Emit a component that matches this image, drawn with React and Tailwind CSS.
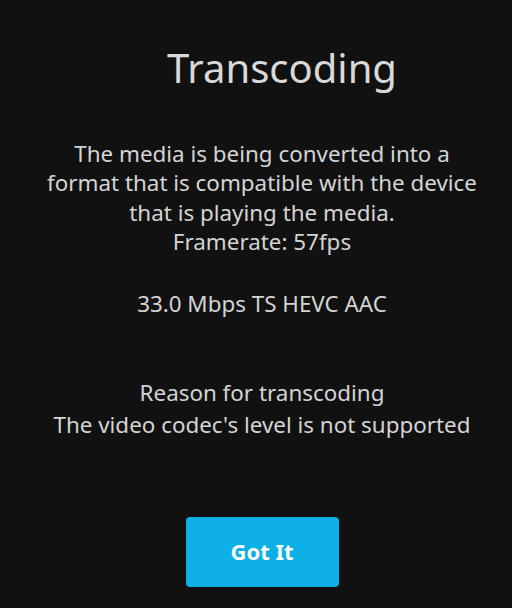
export default function App() {
  return (
    <div
      className="w-[512px] h-[608px] bg-[#111111] text-[#d4d4d4] overflow-hidden"
      style={{ fontFamily: '"Noto Sans", "Open Sans", sans-serif' }}
    >
      <div className="ml-[42px] w-[440px] flex flex-col items-center text-center">
        <h1 className="mt-[40px] pl-[40px] text-[40px] leading-[56px] font-normal text-[#d9d9d9]">
          Transcoding
        </h1>

        <div className="mt-[43px] text-[22.4px] leading-[29.33px]">
          <p>The media is being converted into a format that is compatible with the device that is playing the media.</p>
          <p>Framerate: 57fps</p>
        </div>

        <p className="mt-[33px] text-[22.4px] leading-[29.33px]">33.0 Mbps TS HEVC AAC</p>

        <div className="mt-[58px] text-[22.4px] leading-[32px]">
          <p>Reason for transcoding</p>
          <p>The video codec's level is not supported</p>
        </div>

        <button className="mt-[76px] w-[153px] h-[70px] rounded-[4px] bg-[#0cb0e6] text-white text-[22px] font-bold">
          Got It
        </button>
      </div>
    </div>
  )
}
